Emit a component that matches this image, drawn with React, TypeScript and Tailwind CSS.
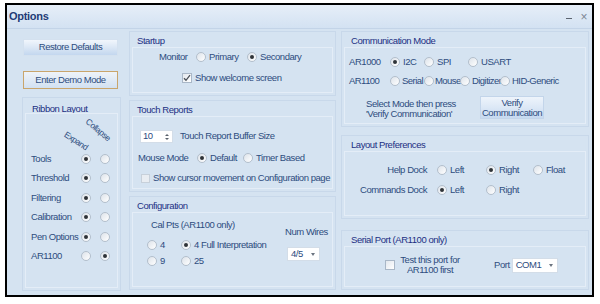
import type { ReactNode } from "react";

function Radio({ on }: { on?: boolean }) {
  return (
    <span className="flex h-[10px] w-[10px] shrink-0 items-center justify-center rounded-full border border-[#b3bfcc] bg-linear-to-br from-[#dde3ea] to-[#ffffff]">
      {on && (
        <span className="h-[4px] w-[4px] rounded-full bg-[#2f3338]" />
      )}
    </span>
  );
}

function Check({ on, dim }: { on?: boolean; dim?: boolean }) {
  return (
    <span
      className={
        dim
          ? "flex h-[9px] w-[9px] shrink-0 items-center justify-center border border-[#c7d0da] bg-[#e9edf2]"
          : "flex h-[10px] w-[10px] shrink-0 items-center justify-center border border-[#a9b7c7] bg-linear-to-br from-[#e3e8ee] to-[#ffffff]"
      }
    >
      {on && (
        <svg width="8" height="8" viewBox="0 0 8 8">
          <polyline
            points="1,4.2 3,6.3 7,1.2"
            fill="none"
            stroke="#4a5058"
            strokeWidth="1.3"
          />
        </svg>
      )}
    </span>
  );
}

function Opt({
  text,
  on,
  w = "",
  gap = "ml-[3px]",
}: {
  text: string;
  on?: boolean;
  w?: string;
  gap?: string;
}) {
  return (
    <div className={`flex shrink-0 items-center whitespace-nowrap ${w}`}>
      <Radio on={on} />
      <span className={gap}>{text}</span>
    </div>
  );
}

function Group({
  title,
  className,
  cap = "pl-[7px]",
  children,
}: {
  title: string;
  className: string;
  cap?: string;
  children: ReactNode;
}) {
  return (
    <div className={`flex flex-col border border-[#c8d8ea] ${className}`}>
      <div className={`h-[15px] whitespace-nowrap pt-[3px] leading-[12px] text-[#1c2f83] ${cap}`}>
        {title}
      </div>
      <div className="mx-[2px] mb-[2px] flex-1 border border-[#e4edf7]">
        {children}
      </div>
    </div>
  );
}

function Combo({ text, w }: { text: string; w: string }) {
  return (
    <div className={`flex items-center justify-between border border-[#d3dde8] bg-white pl-[3px] pr-[4px] ${w}`}>
      <span>{text}</span>
      <span className="h-0 w-0 border-x-[2.5px] border-t-[3px] border-x-transparent border-t-[#6b7480]" />
    </div>
  );
}

const rows = [
  { name: "Tools", expand: true },
  { name: "Threshold", expand: true },
  { name: "Filtering", expand: true },
  { name: "Calibration", expand: true },
  { name: "Pen Options", expand: true },
  { name: "AR1100", expand: false },
];

export default function App() {
  return (
    <div className="h-[304px] w-[600px] overflow-hidden bg-white pl-[5px] pt-[3px] font-['Liberation_Sans',Arial,sans-serif] text-[9.5px] tracking-[-0.45px] text-[#2d4c7e]">
      <div className="flex h-[294px] w-[589px] flex-col border-2 border-black bg-[#d5e3f1]">
        {/* title bar */}
        <div className="flex h-[24px] shrink-0 items-center justify-between border-b border-[#c3d4e8] bg-linear-to-b from-[#e6eef8] to-[#d3e2f2] pl-[2px] pr-[5px]">
          <span className="pb-[1px] text-[11px] font-bold tracking-[-0.3px] text-[#1f3c77]">
            Options
          </span>
          <div className="flex items-center gap-[8px] text-[#7d8794]">
            <span className="mt-[4px] h-[1.5px] w-[6px] bg-[#5b6470]" />
            <span className="text-[12px] leading-none">×</span>
          </div>
        </div>

        {/* body */}
        <div className="flex flex-1">
          {/* left column */}
          <div className="ml-[15px] flex w-[99px] flex-col">
            <button className="ml-[1px] mt-[10px] h-[17px] w-[95px] border border-[#d4e1ef] bg-linear-to-b from-[#f1f6fc] via-[#dbe7f5] to-[#c3d7ef] text-[#2d4c7e]">
              Restore Defaults
            </button>
            <button className="ml-[1px] mt-[15px] h-[18px] w-[95px] border border-[#c9a56c] bg-linear-to-b from-[#eef3f9] to-[#d2e1f2] text-[#2d4c7e]">
              Enter Demo Mode
            </button>
            <Group
              title="Ribbon Layout"
              className="mt-[8px] h-[194px]"
              cap="pl-[9px] pt-[5px]"
            >
              <div className="relative h-[35px]">
                <span className="absolute left-[50px] top-[27px] -translate-x-1/2 -translate-y-1/2 rotate-[33deg] text-[8.5px]">
                  Expand
                </span>
                <span className="absolute left-[72px] top-[16px] -translate-x-1/2 -translate-y-1/2 rotate-[40deg] text-[8.5px]">
                  Collapse
                </span>
              </div>
              {rows.map((r) => (
                <div
                  key={r.name}
                  className="flex h-[19.5px] items-center pl-[5px]"
                >
                  <span className="w-[50px] whitespace-nowrap">
                    {r.name}
                  </span>
                  <Radio on={r.expand} />
                  <span className="ml-[9px]">
                    <Radio on={!r.expand} />
                  </span>
                </div>
              ))}
            </Group>
          </div>

          {/* middle column */}
          <div className="ml-[8px] flex w-[207px] flex-col">
            <Group title="Startup" className="mt-[2px] h-[65px]">
              <div className="mt-[2px] flex h-[14px] items-center pl-[26px]">
                <span className="w-[37px]">Monitor</span>
                <Opt text="Primary" w="w-[51px]" />
                <Opt text="Secondary" on />
              </div>
              <div className="mt-[7px] flex h-[14px] items-center pl-[49px]">
                <Check on />
                <span className="ml-[3px]">Show welcome screen</span>
              </div>
            </Group>

            <Group title="Touch Reports" className="mt-[4px] h-[92px]">
              <div className="mt-[13px] flex h-[13px] items-center pl-[7px]">
                <div className="flex h-[13px] w-[33px] items-center justify-between border border-[#d3dde8] bg-white pl-[2px] pr-[3px]">
                  <span>10</span>
                  <span className="flex flex-col gap-[2px]">
                    <span className="h-0 w-0 border-x-[2px] border-b-[2.5px] border-x-transparent border-b-[#59616c]" />
                    <span className="h-0 w-0 border-x-[2px] border-t-[2.5px] border-x-transparent border-t-[#59616c]" />
                  </span>
                </div>
                <span className="ml-[7px]">Touch Report Buffer Size</span>
              </div>
              <div className="mt-[8px] flex h-[14px] items-center pl-[5px]">
                <span className="w-[59px]">Mouse Mode</span>
                <Opt text="Default" on w="w-[46px]" />
                <Opt text="Timer Based" />
              </div>
              <div className="mt-[6px] flex h-[14px] items-center pl-[8px]">
                <Check dim />
                <span className="ml-[3px] whitespace-nowrap">
                  Show cursor movement on Configuration page
                </span>
              </div>
            </Group>

            <Group title="Configuration" className="mt-[4px] h-[94px]">
              <div className="flex">
                <div className="w-[152px]">
                  <div className="mt-[5px] flex h-[14px] items-center pl-[18px]">
                    Cal Pts (AR1100 only)
                  </div>
                  <div className="mt-[6px] flex h-[14px] items-center pl-[14px]">
                    <Opt text="4" w="w-[34px]" />
                    <Opt text="4 Full Interpretation" on />
                  </div>
                  <div className="mt-[2px] flex h-[14px] items-center pl-[14px]">
                    <Opt text="9" w="w-[34px]" />
                    <Opt text="25" />
                  </div>
                </div>
                <div>
                  <div className="mt-[12px] flex h-[14px] items-center whitespace-nowrap">
                    Num Wires
                  </div>
                  <div className="ml-[2px] mt-[8px]">
                    <Combo text="4/5" w="h-[14px] w-[33px]" />
                  </div>
                </div>
              </div>
            </Group>
          </div>

          {/* right column */}
          <div className="ml-[5px] flex w-[248px] flex-col">
            <Group title="Communication Mode" className="mt-[2px] h-[96px]" cap="pl-[9px]">
              <div className="mt-[7px] flex h-[14px] items-center pl-[4px]">
                <span className="w-[41px]">AR1000</span>
                <Opt text="I2C" on w="w-[34px]" />
                <Opt text="SPI" w="w-[44px]" />
                <Opt text="USART" />
              </div>
              <div className="mt-[5px] flex h-[14px] items-center pl-[4px] tracking-[-0.55px]">
                <span className="w-[41px]">AR1100</span>
                <Opt text="Serial" w="w-[34px]" gap="ml-[2px]" />
                <Opt text="Mouse" w="w-[36px]" gap="ml-[1px]" />
                <Opt text="Digitizer" w="w-[40px]" gap="ml-[2px]" />
                <Opt text="HID-Generic" gap="ml-[2px]" />
              </div>
              <div className="mt-[8px] flex items-start">
                <div className="ml-[21px] mt-[3px] w-[85px] whitespace-nowrap text-center leading-[10px]">
                  Select Mode then press
                  <br />
                  'Verify Communication'
                </div>
                <button className="ml-[29px] h-[23px] w-[64px] border border-[#c3d5ea] bg-linear-to-b from-[#eef4fb] via-[#dce8f6] to-[#c6d9f0] leading-[10px] text-[#2d4c7e]">
                  Verify
                  <br />
                  Communication
                </button>
              </div>
            </Group>

            <Group title="Layout Preferences" className="mt-[8px] h-[84px]" cap="pl-[9px]">
              <div className="mt-[11px] flex h-[14px] items-center">
                <span className="w-[92px] pr-[10px] text-right">Help Dock</span>
                <Opt text="Left" w="w-[49px]" />
                <Opt text="Right" on w="w-[47px]" />
                <Opt text="Float" />
              </div>
              <div className="mt-[6px] flex h-[14px] items-center">
                <span className="w-[92px] whitespace-nowrap pr-[10px] text-right">
                  Commands Dock
                </span>
                <Opt text="Left" on w="w-[49px]" />
                <Opt text="Right" />
              </div>
            </Group>

            <Group title="Serial Port (AR1100 only)" className="mt-[11px] h-[60px]" cap="pl-[9px]">
              <div className="mt-[8px] flex h-[20px] items-center pl-[40px]">
                <Check />
                <div className="ml-[3px] w-[64px] whitespace-nowrap text-center leading-[10px]">
                  Test this port for
                  <br />
                  AR1100 first
                </div>
                <span className="ml-[32px]">Port</span>
                <div className="ml-[2px]">
                  <Combo text="COM1" w="h-[15px] w-[46px]" />
                </div>
              </div>
            </Group>
          </div>
        </div>
      </div>
    </div>
  );
}
